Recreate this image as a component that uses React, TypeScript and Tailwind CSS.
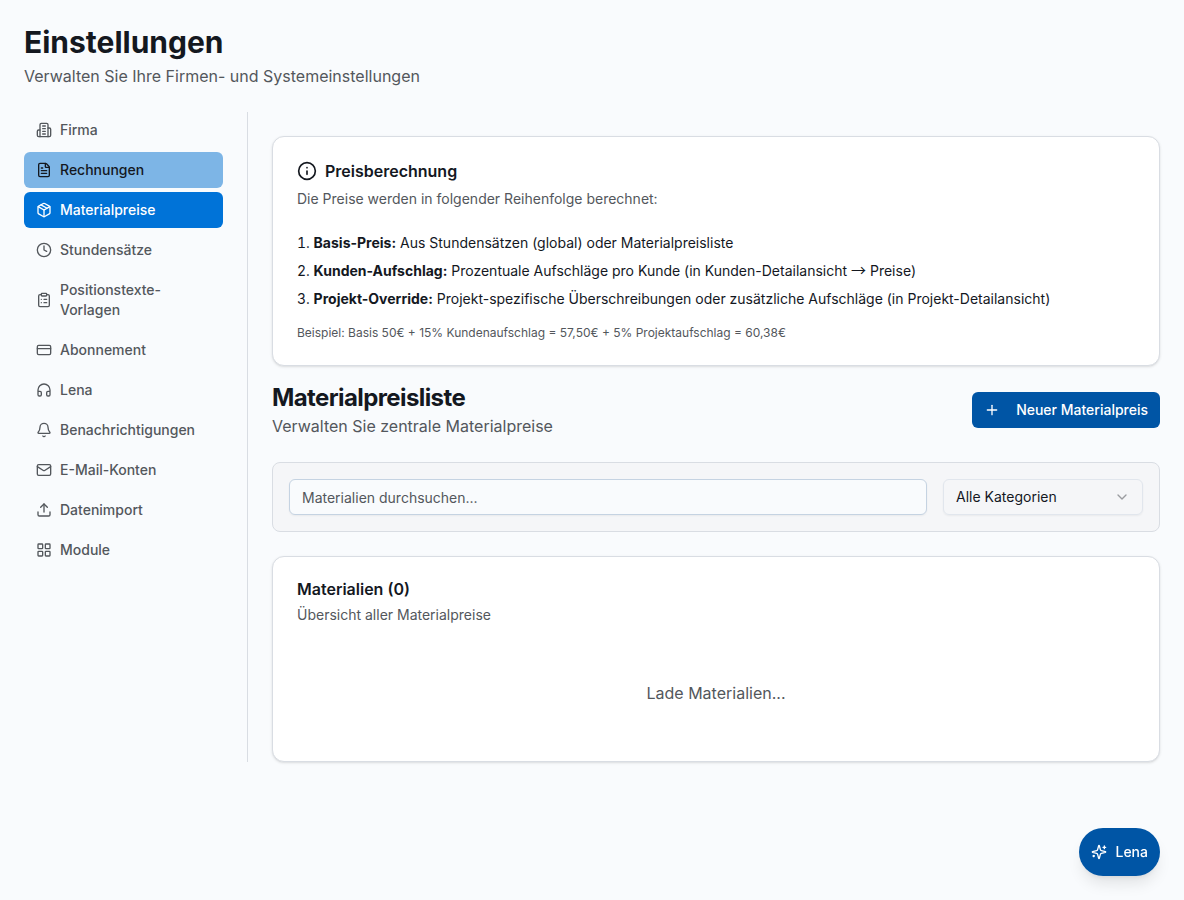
import React from 'react';
import {
  Bell,
  ChevronDown,
  ClipboardList,
  Clock,
  CreditCard,
  FileText,
  Headphones,
  Info,
  LayoutGrid,
  Mail,
  Package,
  Plus,
  Upload,
} from 'lucide-react';
import clsx from 'clsx';

interface IconProps {
  className?: string;
}

interface NavItem {
  label: string;
  icon: React.ComponentType<IconProps>;
  state?: 'active' | 'hover';
}

const StrokeIcon: React.FC<IconProps & { children: React.ReactNode }> = ({ className, children }) => (
  <svg
    className={className}
    viewBox="0 0 24 24"
    fill="none"
    stroke="currentColor"
    strokeWidth={2}
    strokeLinecap="round"
    strokeLinejoin="round"
  >
    {children}
  </svg>
);

const BuildingIcon: React.FC<IconProps> = ({ className }) => (
  <StrokeIcon className={className}>
    <path d="M6 22V4a2 2 0 0 1 2-2h8a2 2 0 0 1 2 2v18Z" />
    <path d="M6 12H4a2 2 0 0 0-2 2v6a2 2 0 0 0 2 2h2" />
    <path d="M18 9h2a2 2 0 0 1 2 2v9a2 2 0 0 1-2 2h-2" />
    <path d="M10 6h4" />
    <path d="M10 10h4" />
    <path d="M10 14h4" />
    <path d="M10 18h4" />
  </StrokeIcon>
);

const SparklesIcon: React.FC<IconProps> = ({ className }) => (
  <StrokeIcon className={className}>
    <path d="M9.937 15.5A2 2 0 0 0 8.5 14.063l-6.135-1.582a.5.5 0 0 1 0-.962L8.5 9.936A2 2 0 0 0 9.937 8.5l1.582-6.135a.5.5 0 0 1 .963 0L14.063 8.5A2 2 0 0 0 15.5 9.937l6.135 1.581a.5.5 0 0 1 0 .964L15.5 14.063a2 2 0 0 0-1.437 1.437l-1.582 6.135a.5.5 0 0 1-.963 0z" />
    <path d="M20 3v4" />
    <path d="M22 5h-4" />
    <path d="M4 17v2" />
    <path d="M5 18H3" />
  </StrokeIcon>
);

const navItems: NavItem[] = [
  { label: 'Firma', icon: BuildingIcon },
  { label: 'Rechnungen', icon: FileText, state: 'hover' },
  { label: 'Materialpreise', icon: Package, state: 'active' },
  { label: 'Stundensätze', icon: Clock },
  { label: 'Positionstexte-Vorlagen', icon: ClipboardList },
  { label: 'Abonnement', icon: CreditCard },
  { label: 'Lena', icon: Headphones },
  { label: 'Benachrichtigungen', icon: Bell },
  { label: 'E-Mail-Konten', icon: Mail },
  { label: 'Datenimport', icon: Upload },
  { label: 'Module', icon: LayoutGrid },
];

const Card: React.FC<{ children: React.ReactNode; className?: string }> = ({ children, className }) => (
  <div className={clsx('rounded-xl border border-[#d9dde3] bg-white p-6 shadow-sm', className)}>{children}</div>
);

const Sidebar: React.FC = () => (
  <aside className="w-56 shrink-0 border-r border-[#d9dde3] pr-6">
    <nav className="flex flex-col gap-1">
      {navItems.map(({ label, icon: Icon, state }) => (
        <button
          key={label}
          className={clsx(
            'flex items-center gap-2 rounded-md px-3 py-2 text-left text-sm font-medium',
            state === 'active' && 'bg-[#0073d8] text-white',
            state === 'hover' && 'bg-[#7db5e6] text-[#14181f]',
            !state && 'text-[#53575c]'
          )}
        >
          <Icon className="size-4 shrink-0" />
          <span>{label}</span>
        </button>
      ))}
    </nav>
  </aside>
);

const App: React.FC = () => {
  return (
    <div className="min-h-screen bg-[#f9fbfd] p-6 font-['Inter',sans-serif] text-[#14181f]">
      <h1 className="text-3xl font-bold">Einstellungen</h1>
      <p className="mt-1 text-[#53575c]">Verwalten Sie Ihre Firmen- und Systemeinstellungen</p>

      <div className="mt-6 flex gap-6">
        <Sidebar />

        <main className="min-w-0 flex-1 pt-6">
          <Card>
            <h3 className="flex items-center gap-2 leading-none font-semibold">
              <Info className="size-5" />
              Preisberechnung
            </h3>
            <p className="mt-2 text-sm text-[#53575c]">Die Preise werden in folgender Reihenfolge berechnet:</p>
            <ol className="mt-6 list-inside list-decimal space-y-2 text-sm">
              <li>
                <strong>Basis-Preis:</strong> Aus Stundensätzen (global) oder Materialpreisliste
              </li>
              <li>
                <strong>Kunden-Aufschlag:</strong> Prozentuale Aufschläge pro Kunde (in Kunden-Detailansicht{' '}
                <span className="font-['Noto_Sans_CJK_SC',sans-serif] text-[15px] leading-none">→</span> Preise)
              </li>
              <li>
                <strong>Projekt-Override:</strong> Projekt-spezifische Überschreibungen oder zusätzliche Aufschläge (in
                Projekt-Detailansicht)
              </li>
            </ol>
            <p className="mt-4 text-xs text-[#53575c]">
              Beispiel: Basis 50€ + 15% Kundenaufschlag = 57,50€ + 5% Projektaufschlag = 60,38€
            </p>
          </Card>

          <div className="mt-4 flex items-center justify-between">
            <div>
              <h2 className="text-2xl font-bold tracking-tight">Materialpreisliste</h2>
              <p className="text-[#53575c]">Verwalten Sie zentrale Materialpreise</p>
            </div>
            <button className="flex h-9 items-center gap-4 rounded-md bg-[#0055a5] px-3 text-sm font-medium text-white">
              <Plus className="size-4" />
              Neuer Materialpreis
            </button>
          </div>

          <div className="mt-6 flex gap-4 rounded-lg border border-[#d9dde3] bg-[#f5f6f8] p-4">
            <input
              type="text"
              placeholder="Materialien durchsuchen..."
              className="h-9 min-w-0 flex-1 rounded-md border border-[#c5d3e2] bg-[#f9fbfd] px-3 py-1 text-sm shadow-xs placeholder:text-[#53575c]"
            />
            <button className="flex h-9 w-50 items-center justify-between rounded-md border border-[#e1e6ed] px-3 text-sm shadow-xs">
              Alle Kategorien
              <ChevronDown className="size-4 opacity-40" />
            </button>
          </div>

          <Card className="mt-6">
            <h3 className="leading-none font-semibold">Materialien (0)</h3>
            <p className="mt-2 text-sm text-[#53575c]">Übersicht aller Materialpreise</p>
            <div className="mt-6 py-8 text-center text-[#53575c]">Lade Materialien...</div>
          </Card>
        </main>
      </div>

      <button className="fixed right-6 bottom-6 flex h-12 items-center gap-2 rounded-full bg-[#0055a5] px-3 text-sm font-medium text-white shadow-lg">
        <SparklesIcon className="size-4" />
        Lena
      </button>
    </div>
  );
};

export default App;
